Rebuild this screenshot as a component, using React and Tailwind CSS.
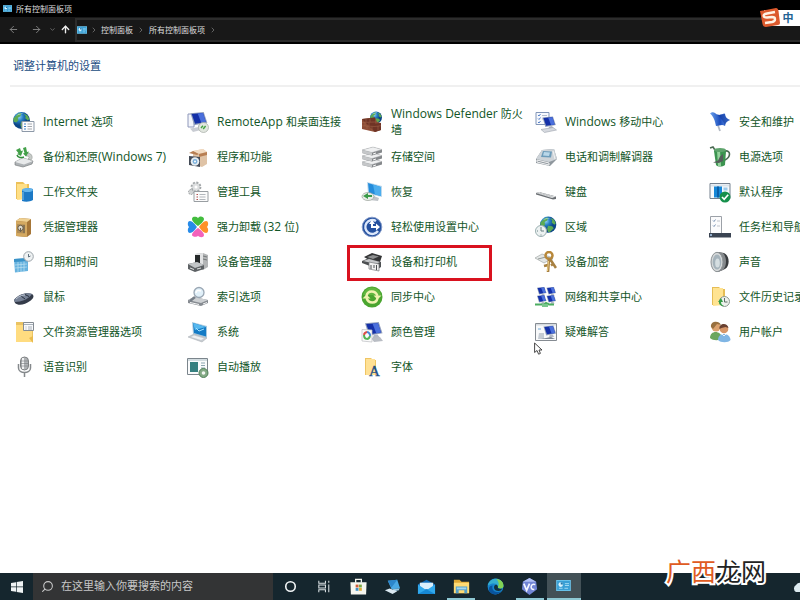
import React from 'react';
import { ChevronDown, ChevronRight, ArrowLeft, ArrowRight, ArrowUp, Search } from 'lucide-react';

function Globe({ x = 0, y = 0, s = 1 }) {
    return (
        <g transform={`translate(${x} ${y}) scale(${s})`}>
            <circle cx="8" cy="8" r="8" fill="url(#sea)" />
            <path d="M2 4.5 5 1.5 8 1 7 4 4.5 5.5 5 8 3 10 0.5 9 0.4 6ZM10 1.5 13.5 3 15.5 6.5 14 8 11.5 6 12 4ZM8 9l4 0.5 1.5 2L10 15 8 15.5 7 12Z" fill="#5cab54" />
            <path d="M3 3.5Q6 0.8 10 1.5 6 2.5 3 3.5Z" fill="#d5f0ff" opacity="0.8" />
        </g>
    );
}

function Screen({ x = 0, y = 0, s = 1 }) {
    return (
        <g transform={`translate(${x} ${y}) scale(${s})`}>
            <path d="M0 1 11 0 14 9 3 11Z" fill="#8f9dbb" />
            <path d="M1 1.6 10.4 0.9 12.8 8.3 3.8 9.8Z" fill="#1430a8" />
            <path d="M6 1.2 10.4 0.9 12.8 8.3 9 9Z" fill="#4a6fdc" />
            <path d="M7 10.4 10 10 12 12.5 6 13.3Z" fill="#b3b8c4" />
        </g>
    );
}

const icons = {
    internet: (
        <>
            <Globe y={1} s={1.06} />
            <path d="M9 10.5h12v10H9z" fill="#fcfcfd" stroke="#8d99a8" />
            <path d="M11 13h2M11 15.5h2M11 18h2" stroke="#3c82c8" />
            <path d="M14.5 13H19M14.5 15.5H19M14.5 18H19" stroke="#a5aab0" />
        </>
    ),
    remoteApp: (
        <>
            <path d="M1 3h6v13H1z" fill="#f3f5fb" stroke="#8f98ba" />
            <Screen x={3.5} y={1} s={1.2} />
            <path d="M3 17.5 12 16l2 3-8 2Z" fill="#c9ccd3" />
            <circle cx="16.5" cy="16.5" r="5" fill="#e1e6df" stroke="#a3aaa4" strokeWidth="0.7" />
            <path d="m14 17 2-2.2M16.2 18l2.4-3" stroke="#42a342" strokeWidth="1.4" />
        </>
    ),
    firewall: (
        <>
            <Globe x={9} y={0.5} s={0.75} />
            <path d="M1 8 14 6.5 16 11 20 12v7L14 21 1 18Z" fill="#8d4d36" />
            <path d="M1 8 14 6.5v6L20 12v7l-6 2" fill="#6f3426" />
            <path d="M1 11.5 14 11M1 14.8l13 .7 6-.8M5 8v3.3M9 7.5v3.7M4 11.5V15M8 11.5v3.8M6 15v3.8M11 15.5v4.3M17 15v4.5" stroke="#a5684d" strokeWidth="0.5" fill="none" />
        </>
    ),
    mobility: (
        <>
            <path d="M1 1.5h13v12H1z" fill="#f7f9fd" stroke="#8296b8" />
            <path d="m3 4 1 1 1.5-2M3 7.5l1 1 1.5-2M3 11l1 1 1.5-2" stroke="#2d63bc" strokeWidth="0.8" fill="none" />
            <path d="M7 4.5h5M7 8h3" stroke="#a2adbf" strokeWidth="0.8" />
            <Screen x={7.5} y={5.5} s={0.95} />
            <path d="m6 18.5 12-2 3.5 2.5-12 2.5Z" fill="#d6d9df" stroke="#9ca2ad" strokeWidth="0.6" />
        </>
    ),
    security: (
        <>
            <path d="m5 3 6 17" stroke="#b3b9c4" strokeWidth="1.8" />
            <path d="M1 2.500C4 0 6 2 8 3.5 12 5 15 1.500 16 3c0 3 2 5 5 6-3 1-5 3-5 6-3-2-6 0-9 0-1-5-2-9-6-12.500Z" fill="url(#flag)" />
            <path d="M8 3.500c3 1 6 0 8-.5 0 3 2 5 5 6-3 1-5 3-5 6-1-4-4-8-8-11.500Z" fill="#123da3" opacity="0.6" />
        </>
    ),
    backup: (
        <>
            <path d="m2 16 8-4 10 3-1 3-9 3-8-2Z" fill="#aeb2b5" stroke="#6f7375" strokeWidth="0.6" />
            <path d="m2 16 8-4 10 3-9 3.5Z" fill="#e8eaeb" />
            <path d="M13 7c5-1 8 4 5 7l-3-1c2-2 1-3-2-3Z" fill="#c7cbc8" stroke="#838985" strokeWidth="0.5" />
            <path d="m3 4 4-2 1 3 2-.5L8 10 4 8l1.5-.8ZM10 2l3-1 1 5 2-.5-3 5-3-3 1.5-.6Z" fill="#43a049" />
            <path d="M4 9c1 3 4 3 7 2" stroke="#318e3b" strokeWidth="1.5" fill="none" />
        </>
    ),
    programs: (
        <>
            <path d="m6 5 10-2 4 3v12l-5 3-9-3Z" fill="#dfc3a6" />
            <path d="m6 5 10-2 4 3-9 2Z" fill="#f2dbc2" />
            <path d="m6 5-4 2 8 2 2-1ZM20 6l-8 2v3l8-2Z" fill="#b77e52" />
            <path d="M2 10 13 11v10L2 19Z" fill="#444b57" />
            <circle cx="8" cy="15.5" r="4.3" fill="#e6edf2" />
            <circle cx="8" cy="15.5" r="2.4" fill="#7ab0dc" />
            <circle cx="8" cy="15.5" r="1" fill="#fff" />
        </>
    ),
    storage: (
        <>
            {[13, 7, 1].map(y => (
                <g key={y} transform={`translate(0 ${y})`}>
                    <path d="m1 3 11-3 9 2.5v3L11 8.5 1 6Z" fill="#85888b" />
                    <path d="m1 3 11-3 9 2.5L11 5.5Z" fill="#eff0f1" stroke="#a5a7a9" strokeWidth="0.4" />
                    <path d="m1 3 10 2.5v3L1 6Z" fill="#c5c7c9" />
                    <path d="m12 7 3-1" stroke="#f8f8f8" />
                </g>
            ))}
        </>
    ),
    phone: (
        <>
            <path d="m1 13 6-9 12-1 3 10-7 7L1 17Z" fill="#8f979d" />
            <path d="m1 13 6-9 12-1 3 10-8 3Z" fill="#cdd3d8" />
            <path d="m8 5 9 .5-1 6L6 11Z" fill="#6d9cba" />
            <path d="m9 6 6 .5-1 3.5-6-.5Z" fill="#b9d7e9" />
            <path d="m2 14 12 3v2L2 16ZM18 5l2 8" stroke="#f2f3f4" fill="none" />
        </>
    ),
    power: (
        <>
            <path d="M1 2 4 1l4 6 8-2c6-1 6 6 0 9" fill="none" stroke="#4c6b54" strokeWidth="1.6" />
            <path d="M5 5c4-3 8-3 12 0l-1 14c-3 2-7 2-9 0Z" fill="#3c9450" />
            <path d="M8 4h3l1 16H9Z" fill="#95d39d" />
            <ellipse cx="11" cy="4" rx="6" ry="2" fill="#5fa46d" />
            <path d="M14 8v7l-4 2-6-.5 5-2 2-4Z" fill="#555e5b" />
        </>
    ),
    workFolders: (
        <>
            <path d="M3 1h7l2 2h4v15H3Z" fill="#ecc159" />
            <path d="M4 3h10v15l-10 1Z" fill="#ffdf86" />
            <path d="M9 9c3-2 8-2 11-1v11c-3 2-8 2-11 1Z" fill="#1c79c5" />
            <ellipse cx="14.5" cy="9" rx="5.5" ry="2" fill="#64b5ec" />
            <path d="M10 11v8" stroke="#5fadde" strokeWidth="1.5" />
        </>
    ),
    tools: (
        <>
            <circle cx="9" cy="6" r="4.5" fill="#dcdedf" stroke="#a3a7a9" strokeWidth="1.8" strokeDasharray="2 1.5" />
            <circle cx="9" cy="6" r="1.5" fill="#fff" />
            <circle cx="4" cy="11" r="2.5" fill="#d2d4d5" stroke="#999d9f" strokeDasharray="1.5 1" />
            <path d="M7 10.5h14v10H7z" fill="#fbfbfb" stroke="#999ea2" />
            <path d="M9.5 13.5h1.5M9.5 16h1.5M9.5 18.5h1.5" stroke="#b35151" />
            <path d="M12.5 13.5h6M12.5 16h6M12.5 18.5h6" stroke="#9299a0" strokeWidth="0.7" />
        </>
    ),
    recovery: (
        <>
            <path d="m6 1 15 4v11L7 13Z" fill="#bdd9ed" />
            <path d="m7 2 13 4v9L8 12Z" fill="#238cdb" />
            <path d="m12 3.500 8 2.500v9l-6-1.500Z" fill="#4caeee" />
            <path d="m10 14 8 3-1 3-9-1Z" fill="#bfc4c8" />
            <ellipse cx="7" cy="15.500" rx="6" ry="4" fill="#e8ede9" stroke="#869087" strokeWidth="0.6" />
            <path d="m2 15 5-3v2h4v2H7v2Z" fill="#3b9a48" />
        </>
    ),
    keyboard: (
        <>
            <path d="m1 12 3-1 17 4.5v2.5l-3 .5L1 13.5Z" fill="#6a6e72" />
            <path d="m1 12 3-1 17 4.5-4 1.5Z" fill="#e2e4e5" />
            <path d="m3 12.2 14 3.8M5 11.8l13 3.5" stroke="#9a9ea1" strokeWidth="0.6" strokeDasharray="1 .6" />
        </>
    ),
    defaults: (
        <>
            <path d="M1 2.500h20v15H1z" fill="#f6f9fc" stroke="#75818f" />
            <path d="M2 3.500h18v2H2z" fill="#dbe3ea" />
            <path d="M5 5.500h8v11H5z" fill="#1687d7" />
            <path d="M8 5.500h2v11H8z" fill="#085fa9" />
            <path d="M14.5 6.500h4v3h-4z" fill="#9bc9e9" />
            <circle cx="16" cy="16" r="5.5" fill="#16904c" />
            <path d="m13 16 2.2 2.3 4-4.5" stroke="#fff" strokeWidth="1.7" fill="none" />
        </>
    ),
    credentials: (
        <>
            <path d="m3 5 4-3 11 1v15l-4 3-11-1Z" fill="#a67638" />
            <path d="m3 5 4-3 11 1-4 3Z" fill="#efd091" />
            <path d="m3 5 11 1v15L3 20Z" fill="#d4a961" />
            <path d="m4 8 8 .5v9L4 17Z" fill="#b08d57" />
            <circle cx="7.500" cy="12" r="2.7" fill="#dedbd0" stroke="#695b43" />
            <path d="M7.500 12v4M11 9v8" stroke="#6b6250" strokeWidth="1.1" />
        </>
    ),
    uninstall: (
        <>
            <path d="M11 10C8 8 5 5 5 3c0-3 5-2.5 6-.8C12-.5 17 0 17 3c0 2-3 5-6 7Z" fill="#43bd3e" />
            <path d="M12 11c2-3 5-6 7-6 3 0 2.5 5 .8 6 1.7 1 2.2 6-.8 6-2 0-5-3-7-6Z" fill="#ff9127" />
            <path d="M11 12c3 2 6 5 6 7 0 3-5 2.5-6 .8-1 1.7-6 1.2-6-.8 0-2 3-5 6-7Z" fill="#f362bb" />
            <path d="M10 11c-2 3-5 6-7 6-3 0-2.5-5-.8-6C.5 10 0 5 3 5c2 0 5 3 7 6Z" fill="#278be9" />
        </>
    ),
    ease: (
        <>
            <circle cx="11" cy="11" r="9.8" fill="#24509f" stroke="#8299c8" />
            <path d="M15 5A7 7 0 1 0 17 15" stroke="#dce7fa" strokeWidth="2.4" fill="none" />
            <path d="M11 5v6h6" stroke="#fff" strokeWidth="2" fill="none" />
            <path d="m15 7.500 4 3.500-4 3.500ZM8 8l3-4 3 4Z" fill="#fff" />
        </>
    ),
    region: (
        <>
            <Globe x={5} y={0.5} s={1.02} />
            <circle cx="6" cy="15" r="5.5" fill="#edf2f2" stroke="#9aafb1" />
            <path d="M6 11v4h3M6 18.5v1M2 15h1" stroke="#688082" fill="none" />
        </>
    ),
    taskbar: (
        <>
            <path d="M1.500.5h11v17h-11z" fill="#fbfbfc" stroke="#9ca1a8" />
            <path d="m4 4.500 1 1 1.5-2M4 9.5l1 1 1.5-2" stroke="#55759e" strokeWidth="0.8" fill="none" />
            <path d="M8 5h3M8 10h3" stroke="#a8adb5" strokeWidth="0.7" />
            <path d="M0 17h22v4.500H0z" fill="#3a4452" />
            <path d="M1 18h2v2H1z" fill="#8faac8" />
        </>
    ),
    date: (
        <>
            <path d="m1 8 14-1v13L2 21.5Z" fill="#66b2df" />
            <path d="m1 8 14-1v3L1 11Z" fill="#3b93c8" />
            <path d="m2 14 12-1M2 17l12-1M5 11v10M8 11v10M11 10.5v10" stroke="#bfe2f2" strokeWidth="0.7" />
            <circle cx="15.5" cy="5.5" r="4.8" fill="#eff2f3" stroke="#9ca4aa" />
            <path d="M15.5 3v3l2-1" stroke="#647480" fill="none" />
        </>
    ),
    device: (
        <>
            <path d="m8 3 8-1 5 2v12l-5 3-8-3Z" fill="#b3b5b6" />
            <path d="m8 3 8-1v15l-8-2Z" fill="#e2e3e4" />
            <path d="M8 4h5v8H8z" fill="#26292a" />
            <path d="m1 13 9-2 7 3v4l-9 3-7-3Z" fill="#5d6164" />
            <path d="m1 13 9-2 7 3-9 3Z" fill="#c2c5c7" />
            <path d="m3 17 4 1.5M10 18l4-1" stroke="#e0e2e2" />
            <path d="m16 5 4 1M16 8l4 1" stroke="#747879" />
        </>
    ),
    printer: (
        <>
            <path d="m3 6 8-4 10 3-2 6-9-1Z" fill="#333435" />
            <path d="m6 6 6-2 6 1.500-6 2.500Z" fill="#8e9091" />
            <path d="m1 10 7-3 12 4v5l-3 2L1 12Z" fill="#4d5052" />
            <path d="m2 10 6-2 11 3-4 2Z" fill="#c5c7c9" />
            <path d="m8 11 10 2v7l-10-2Z" fill="#f0f0f0" stroke="#777a7c" strokeWidth="0.7" />
            <path d="M10 14v4M13 14v3M15.5 14v5" stroke="#4c5052" />
        </>
    ),
    key: (
        <>
            <path d="M0 7 7 3l11 4-9 5Z" fill="#e3e6e5" stroke="#a4a9a8" strokeWidth="0.7" />
            <path d="m3 8 8-2 7 2" stroke="#929997" fill="none" />
            <circle cx="14" cy="4.500" r="3.500" fill="none" stroke="#b8883a" strokeWidth="2.5" />
            <path d="m14 8-1 13M13 14l-4 1M15 8l6 9M18 13l-2 1.5" stroke="#a88142" strokeWidth="2.6" />
            <path d="m13.5 10-1 10" stroke="#f0d084" />
        </>
    ),
    sound: (
        <>
            <path d="m8 1 7 1c6 3 6 13 1 16l-7 3Z" fill="#383b3e" />
            <path d="m9 1 5 1c4 4 4 13 0 17l-5 2Z" fill="#85898c" />
            <ellipse cx="8" cy="11" rx="6" ry="9.7" fill="#d5d8d9" stroke="#8b9194" />
            <ellipse cx="8" cy="11" rx="4.3" ry="7.5" fill="#a5b3bb" />
            <ellipse cx="8.5" cy="12" rx="2.3" ry="4.5" fill="#d5dee1" />
        </>
    ),
    mouse: (
        <>
            <path d="M1 14c4-5 12-8 18-6 3 2 1 5-2 7-5 4-12 5-15 2Z" fill="#343b49" />
            <path d="M1 14c4-5 12-8 18-6-3 5-11 8-17 8Z" fill="#768195" />
            <path d="m8 10 4 3M12 8.5l4 2" stroke="#26303d" />
            <path d="M3 13c3-3 7-4 9-4" stroke="#b5bfcc" fill="none" />
        </>
    ),
    indexing: (
        <>
            <path d="m1 14 6-3 14 3v3l-7 3L1 17Z" fill="#868b91" />
            <path d="m1 14 6-3 14 3-7 3Z" fill="#cdd0d3" />
            <path d="m3 16.5 9 2M16 18l4-1.5" stroke="#f5f6f6" />
            <path d="m8 11-5 4" stroke="#777f88" strokeWidth="2.5" />
            <circle cx="12" cy="6.500" r="5" fill="#e1f0f9" stroke="#9aa7b4" strokeWidth="1.3" />
            <path d="M9 7c0-3 3-3 5-2" stroke="#fff" strokeWidth="1.5" fill="none" />
        </>
    ),
    sync: (
        <>
            <circle cx="11" cy="11" r="10.5" fill="#4aa52f" />
            <path d="M2 9C4-1 18-1 20 9Z" fill="#78ca51" opacity="0.5" />
            <path d="M5.500 10c1-6 9-6 11 0M16.500 12c-1 6-9 6-11 0" fill="none" stroke="#f0f2b0" strokeWidth="2.4" />
            <path d="m12.500 9.500h8l-4 4ZM1.500 12.500h8l-4-4Z" fill="#f0f2b0" />
        </>
    ),
    network: (
        <>
            <Screen x={2} y={1} s={0.68} />
            <Screen x={11.5} y={1} s={0.68} />
            <Screen x={2} y={9} s={0.68} />
            <Screen x={11.5} y={9} s={0.68} />
            <path d="M0 18.5h9l2-1.5 3 1.5h5" stroke="#4cad61" strokeWidth="2" fill="none" />
            <path d="M7 18h6v3H7z" fill="#78c78b" />
        </>
    ),
    fileHistory: (
        <>
            <path d="M3 1h7l2 2h4v16H3Z" fill="#e6bd55" />
            <path d="M4 2h10v17L4 20Z" fill="#ffe391" />
            <circle cx="15.5" cy="15.5" r="5" fill="#edf1ed" stroke="#8e9992" />
            <path d="M15.5 12v4h3" stroke="#5f6c65" fill="none" />
            <path d="m9 16 3-4 2 4h-2c0 2 1 3 3 4-4 0-5-2-5-4Z" fill="#359d48" />
        </>
    ),
    folderOptions: (
        <>
            <path d="M3 1h8l2 2h7v17H3Z" fill="#eac363" />
            <path d="M3 4h16v17H3Z" fill="#ffdc80" />
            <path d="M10.5 1.5h10v8h-10z" fill="#f8f9fb" stroke="#858c93" />
            <path d="M11 3.5h9M12.5 6h1M15 6h4M12.5 8h1M15 8h4" stroke="#929ea9" strokeWidth="0.8" />
            <path d="m16 17 4 5v-7Z" fill="#e9bb4e" />
        </>
    ),
    system: (
        <>
            <path d="m5 1 15 4v12L6 13Z" fill="#a7c9df" />
            <path d="m6 2 13 4v9.500L7 12Z" fill="#147bc5" />
            <path d="m6 2 13 4-11 3Z" fill="#56b8ef" />
            <path d="m1 16 6-3 13 4-5 4Z" fill="#c6cbd0" stroke="#a5abb0" strokeWidth="0.5" />
            <path d="m4 16 3-1.5 10 3-3 1.500Z" fill="#eff1f2" />
            <path d="m9 7 3 3 5-2" stroke="#a2e1ff" fill="none" />
        </>
    ),
    color: (
        <>
            <Screen x={4} y={1} s={1.25} />
            <path d="m10 17 9-1 3 4-9 1Z" fill="#b9bdc4" />
            <path d="M1 8.5 11 9v12L1 20Z" fill="#fbfbfb" stroke="#bbbdc1" strokeWidth="0.7" />
            <path d="M3 14a3.5 3.5 0 0 1 3-3" stroke="#db4e45" strokeWidth="2" fill="none" />
            <path d="M6 11a3.5 3.5 0 0 1 3 4" stroke="#4486d8" strokeWidth="2" fill="none" />
            <path d="M3 14c0 5 5 5 6 1" stroke="#52b355" strokeWidth="2" fill="none" />
        </>
    ),
    troubleshoot: (
        <>
            <path d="M.5 2.5h21v17H.5z" fill="#f8f9fa" stroke="#858b92" />
            <path d="M1 3h20v1.500H1z" fill="#d6dbe0" />
            <Screen x={8.5} y={4.500} s={0.9} />
            <path d="M4 12h5v6H3z" fill="#c4cbd3" />
            <path d="m6 18 10-2 4 2Z" fill="#7e8896" />
            <path d="M3 8h3" stroke="#6eaadc" />
        </>
    ),
    users: (
        <>
            <circle cx="7" cy="6" r="4.5" fill="#dca26e" />
            <path d="M2 6C1 0 10-1 12 4L8 3 4 8Z" fill="#98703f" />
            <path d="M1 17c0-8 11-8 12 0-2 3-9 3-12 0Z" fill="#6ba65e" />
            <circle cx="15" cy="8" r="4.3" fill="#d69668" />
            <path d="M10.5 8c-1-6 8-7 9-1l-3-1-4 1Z" fill="#694131" />
            <path d="M9 19c0-8 12-8 12.5 0-2 3-10 3-12.5 0Z" fill="#7fb5e4" />
            <path d="m13 13 2 2 2-2" stroke="#e8f2fb" fill="none" />
        </>
    ),
    speech: (
        <>
            <rect x="7.5" y="1" width="8" height="13" rx="4" fill="#afb2b5" stroke="#7e8183" />
            <path d="M10 2v11" stroke="#eff0f1" strokeWidth="2" />
            <path d="M8 5h7M8 7.5h7M8 10h7" stroke="#777b7e" strokeWidth="0.6" />
            <path d="M5.5 8v4c0 6 12 6 12 0V8M11.5 17v4" fill="none" stroke="#85898c" strokeWidth="1.5" />
        </>
    ),
    autoplay: (
        <>
            <path d="M.5 2.500h20v16H.5z" fill="#fafbfc" stroke="#7b858c" />
            <path d="M1 3h19v2H1z" fill="#d3dde1" />
            <path d="M3 6h8v10H3z" fill="#368080" />
            <path d="M14 7h4M14 9.500h4M14 12h4" stroke="#8ba6b0" />
            <circle cx="16.5" cy="17" r="4.5" fill="#84aa85" stroke="#53825b" />
            <circle cx="16.500" cy="17" r="1.800" fill="#f3f7f3" />
        </>
    ),
    fonts: (
        <>
            <path d="M4 2h6l2 2h3v15H4Z" fill="#efc564" />
            <path d="M5 3h9v16H5Z" fill="#ffe195" />
            <text x="8" y="20" fontSize="15" fontFamily="Liberation Serif, serif" fill="#1f4f85" stroke="#1f4f85" strokeWidth="0.4">A</text>
        </>
    ),
};

const items = [
    ['internet', 'Internet 选项'],
    ['remoteApp', 'RemoteApp 和桌面连接'],
    ['firewall', 'Windows Defender 防火墙'],
    ['mobility', 'Windows 移动中心'],
    ['security', '安全和维护'],
    ['backup', '备份和还原(Windows 7)'],
    ['programs', '程序和功能'],
    ['storage', '存储空间'],
    ['phone', '电话和调制解调器'],
    ['power', '电源选项'],
    ['workFolders', '工作文件夹'],
    ['tools', '管理工具'],
    ['recovery', '恢复'],
    ['keyboard', '键盘'],
    ['defaults', '默认程序'],
    ['credentials', '凭据管理器'],
    ['uninstall', '强力卸载 (32 位)'],
    ['ease', '轻松使用设置中心'],
    ['region', '区域'],
    ['taskbar', '任务栏和导航'],
    ['date', '日期和时间'],
    ['device', '设备管理器'],
    ['printer', '设备和打印机'],
    ['key', '设备加密'],
    ['sound', '声音'],
    ['mouse', '鼠标'],
    ['indexing', '索引选项'],
    ['sync', '同步中心'],
    ['network', '网络和共享中心'],
    ['fileHistory', '文件历史记录'],
    ['folderOptions', '文件资源管理器选项'],
    ['system', '系统'],
    ['color', '颜色管理'],
    ['troubleshoot', '疑难解答'],
    ['users', '用户帐户'],
    ['speech', '语音识别'],
    ['autoplay', '自动播放'],
    ['fonts', '字体'],
];

// Latin runs are set one size larger than the Chinese around them
function Label({ text }) {
    return text.split(/([A-Za-z0-9()][A-Za-z0-9() ]*)/).map((part, i) => (
        i % 2 ? <span key={i} className="text-[12px]">{part}</span> : part
    ));
}

function PanelItem({ icon, text, marked }) {
    return (
        <a href="#" className="relative flex h-[35px] items-center gap-2 pr-2 text-[#125527]">
            <svg viewBox="0 0 22 22" className="h-[22px] w-[22px] shrink-0" aria-hidden="true">{icons[icon]}</svg>
            <span><Label text={text} /></span>
            {marked && <span className="absolute -left-[14px] top-px h-9 w-[145px] border-3 border-[#d9121f]" />}
        </a>
    );
}

function PanelIcon({ className }) {
    return (
        <svg viewBox="0 0 16 12" className={className} aria-hidden="true">
            <path d="M0 0h16v12H0z" fill="#6cc5ec" />
            <path d="M1 1h14v10H1z" fill="#399fd5" />
            <circle cx="5" cy="5" r="2.5" fill="#d8f3ff" />
            <path d="M5 5V2.500A2.500 2.500 0 0 1 7.500 5Z" fill="#2375a8" />
            <path d="M9.500 4H14M9.500 6H14M3 9h4M9 9h4" stroke="#a8def5" />
        </svg>
    );
}

const taskIcons = [
    { name: 'Cortana', art: <circle cx="10" cy="10" r="5" fill="none" stroke="#f1f5f6" strokeWidth="1.7" /> },
    { name: '任务视图', art: <path d="M4 4v2.500h7V4M4 16v-2.500h7V16M4 8.500h7v3H4zM14.500 4v2M14.500 8v8" fill="none" stroke="#dbe2e5" strokeWidth="1.1" /> },
    {
        name: 'Microsoft Store',
        art: (
            <>
                <path d="M7 6V2.500h6V6" fill="none" stroke="#f5f5ef" strokeWidth="1.4" />
                <path d="M1.500 5.500h17l-.5 13H2Z" fill="#f5f5ef" />
                <path d="M7 8h3v3H7z" fill="#d35c38" /><path d="M10.500 8h3v3h-3z" fill="#78a843" />
                <path d="M7 11.500h3v3H7z" fill="#3e8fc4" /><path d="M10.500 11.500h3v3h-3z" fill="#dfac36" />
            </>
        ),
    },
    {
        name: '远程桌面',
        art: (
            <>
                <path d="m5 4 10-1 3 9-9 1Z" fill="#4aa8e4" />
                <path d="m5 4 10-1-6 8Z" fill="#2c86cb" />
                <path d="m10 13 7-1v2l-5 1Z" fill="#9ac6df" />
                <path d="m2 14 5-2 8 3-5 3Z" fill="#dae9f2" />
            </>
        ),
    },
    {
        name: '邮件',
        art: (
            <>
                <path d="m1 8 9-5 9 5v10H1Z" fill="#0d6ab7" />
                <path d="M3 6h14v7H3z" fill="#d9effc" />
                <path d="m1 8 9 6 9-6v10H1Z" fill="#31a9ed" />
                <path d="m1 18 9-5 9 5Z" fill="#1688d5" />
            </>
        ),
    },
    {
        name: '文件资源管理器',
        bar: true,
        art: (
            <>
                <path d="M2 3h6l2 2h8v12H2Z" fill="#dfa935" />
                <path d="M2 6h16v11H2Z" fill="#ffdb74" />
                <path d="M4 10h12v7h-3v-3H7v3H4Z" fill="#539fc9" />
                <path d="M5 11h10v2H5Z" fill="#a4d7ed" />
            </>
        ),
    },
    {
        name: 'Microsoft Edge',
        art: (
            <>
                <circle cx="10" cy="10" r="8.3" fill="#1685ce" />
                <path d="M2 9C3 0 17-1 18.300 9c0 4-4 4-6 2 1-4-5-6-10.300-2Z" fill="#35aed0" />
                <path d="M11 2c5 0 8 4 7.300 8-1 3-4 2.500-6 1 2-4 1-6-1.300-9Z" fill="#82d354" />
                <path d="M7 9c-2 6 5 8 9 6-5 6-13 3-13-2 0-3 2-4 4-4Z" fill="#09549e" />
                <path d="M9 9c-2 4 2 7 7 5l1-2c-3 1-5 0-4.500-2C12 8 10 7.500 9 9Z" fill="#13303d" />
            </>
        ),
    },
    {
        name: 'VC',
        bar: true,
        art: (
            <>
                <path d="m10 1 7 4 1 8-8 6-8-6 1-8Z" fill="#7185d5" />
                <path d="m10 1 7 4-14 0Z" fill="#b1c0f5" />
                <path d="m4 7 3 7 3-7" stroke="#f4f6ff" strokeWidth="1.8" fill="none" />
                <path d="M16 8c-5-2-6 6-1 5" stroke="#f4f6ff" strokeWidth="1.6" fill="none" />
            </>
        ),
    },
];

export default function App() {
    return (
        <div className="relative flex min-h-screen flex-col overflow-hidden bg-white font-['Open_Sans','Noto_Sans_CJK_SC',sans-serif]">
            <svg className="absolute h-0 w-0" aria-hidden="true">
                <defs>
                    <radialGradient id="sea" cx="35%" cy="28%">
                        <stop stopColor="#94d4f4" /><stop offset="0.5" stopColor="#267fc4" /><stop offset="1" stopColor="#0b4587" />
                    </radialGradient>
                    <linearGradient id="flag">
                        <stop stopColor="#6ca2ed" /><stop offset="0.5" stopColor="#1b4dbd" /><stop offset="1" stopColor="#77a7ef" />
                    </linearGradient>
                </defs>
            </svg>

            {/* Title bar */}
            <header className="bg-black text-[8px] text-[#dedede]">
                <div className="flex h-[17px] items-center gap-1 pl-[3px]">
                    <PanelIcon className="h-[7px] w-[9px]" />
                    <h1>所有控制面板项</h1>
                </div>
                <nav className="flex h-[27px] items-center border-b-2 border-black bg-[#181818]">
                    <div className="flex w-[75px] shrink-0 items-center justify-between pl-2 pr-1">
                        <button aria-label="后退"><ArrowLeft size={11} className="text-[#858585]" /></button>
                        <button aria-label="前进" className="ml-2"><ArrowRight size={11} className="text-[#858585]" /></button>
                        <button aria-label="历史" className="ml-1"><ChevronDown size={7} className="text-[#999]" /></button>
                        <button aria-label="上移"><ArrowUp size={11} strokeWidth={3} className="text-[#eee]" /></button>
                    </div>
                    <div className="flex h-6 flex-1 items-center border-2 border-r-0 border-[#2c2c2c]">
                        <PanelIcon className="h-2 w-[10px]" />
                        <ChevronRight size={8} className="mx-[3px] text-[#888]" />
                        <button>控制面板</button>
                        <ChevronRight size={8} className="mx-1 text-[#888]" />
                        <button>所有控制面板项</button>
                        <ChevronRight size={8} className="mx-1 text-[#888]" />
                    </div>
                </nav>
            </header>

            <main className="flex-1 overflow-hidden text-[11px] leading-4">
                <h2 className="ml-[10px] h-[43px] border-b-2 border-[#f0f0f0] pl-[3px] pt-[14px] text-[#204c82]">调整计算机的设置</h2>
                <div className="grid grid-cols-[repeat(5,174px)] pl-[13px] pt-[17px]">
                    {items.map(([icon, text]) => (
                        <PanelItem key={icon} icon={icon} text={text} marked={icon === 'printer'} />
                    ))}
                </div>
            </main>

            {/* Taskbar */}
            <footer className="flex h-[27px] items-stretch bg-[#15262e]">
                <button aria-label="开始" className="flex w-[33px] items-center justify-center">
                    <svg viewBox="0 0 12 12" className="h-3 w-3"><path d="m0 2 5-.8v4.400H0ZM5.700 1 12 0v5.600H5.700ZM0 6.300h5v4.500L0 10ZM5.700 6.300H12V12l-6.300-1Z" fill="#eff3f4" /></svg>
                </button>
                <label className="flex w-60 items-center gap-[7px] bg-[#333435] pl-2 text-[#c8c8c8]">
                    <Search size={13} className="-scale-x-100" />
                    <input aria-label="搜索" placeholder="在这里输入你要搜索的内容" className="min-w-0 flex-1 bg-transparent text-[11px] outline-none placeholder:text-[#c8c8c8]" />
                </label>
                <div className="grid w-[308px] grid-cols-9">
                    {taskIcons.map(({ name, art, bar }) => (
                        <button key={name} aria-label={name} className="relative flex items-center justify-center">
                            <svg viewBox="0 0 20 20" className="h-[19px] w-[19px]">{art}</svg>
                            {bar && <span className="absolute inset-x-[3px] bottom-0 h-[2px] bg-[#8fc9d4]" />}
                        </button>
                    ))}
                    <button aria-label="控制面板" className="flex items-center justify-center border-b-2 border-[#8fc9d4] bg-[#435157]">
                        <PanelIcon className="h-[11px] w-[15px]" />
                    </button>
                </div>
                <svg viewBox="0 0 16 12" className="-mr-2 ml-auto h-3 w-4 self-center" aria-hidden="true">
                    <path d="M4 11a4 4 0 0 1 0-7 5 5 0 0 1 9 2 3 3 0 0 1 0 5Z" fill="#dceaf0" />
                </svg>
            </footer>

            {/* Input method badge */}
            <div className="absolute right-0 top-[10px] flex h-4 w-9 items-center justify-center bg-white pl-3 text-[11px] font-bold text-[#236294]">
                中
                <svg viewBox="0 0 20 20" className="absolute -left-1 -top-[2px] h-5 w-5" aria-hidden="true">
                    <path d="m0 3 16-3q2 0 2.500 3L20 15q0 2-2 2L6 19q-3 0-3.500-3Z" fill="#dc592c" />
                    <path d="M15 4 7 5.500c-5 1-4 4 0 4l5-.5c4 0 4 4 0 5l-7 1" fill="none" stroke="#fff2e4" strokeWidth="2.4" />
                </svg>
            </div>

            {/* Mouse pointer */}
            <svg viewBox="0 0 9 13" className="absolute left-[534px] top-[342px] h-[13px] w-[9px]" aria-hidden="true">
                <path d="M.6 1v9.500L3 8.500l1.600 3.700 1.800-.8L5 8h3Z" fill="#fff" stroke="#333" strokeWidth="0.9" />
            </svg>

            {/* Site mark */}
            <div className="absolute bottom-[14px] right-[34px] font-['Noto_Sans_CJK_SC',sans-serif] text-[25px] leading-[32px] text-[#222] [-webkit-text-stroke:4px_white] [paint-order:stroke_fill]">
                <span className="text-[#df5b22]">广西</span>龙网
            </div>
        </div>
    );
}
